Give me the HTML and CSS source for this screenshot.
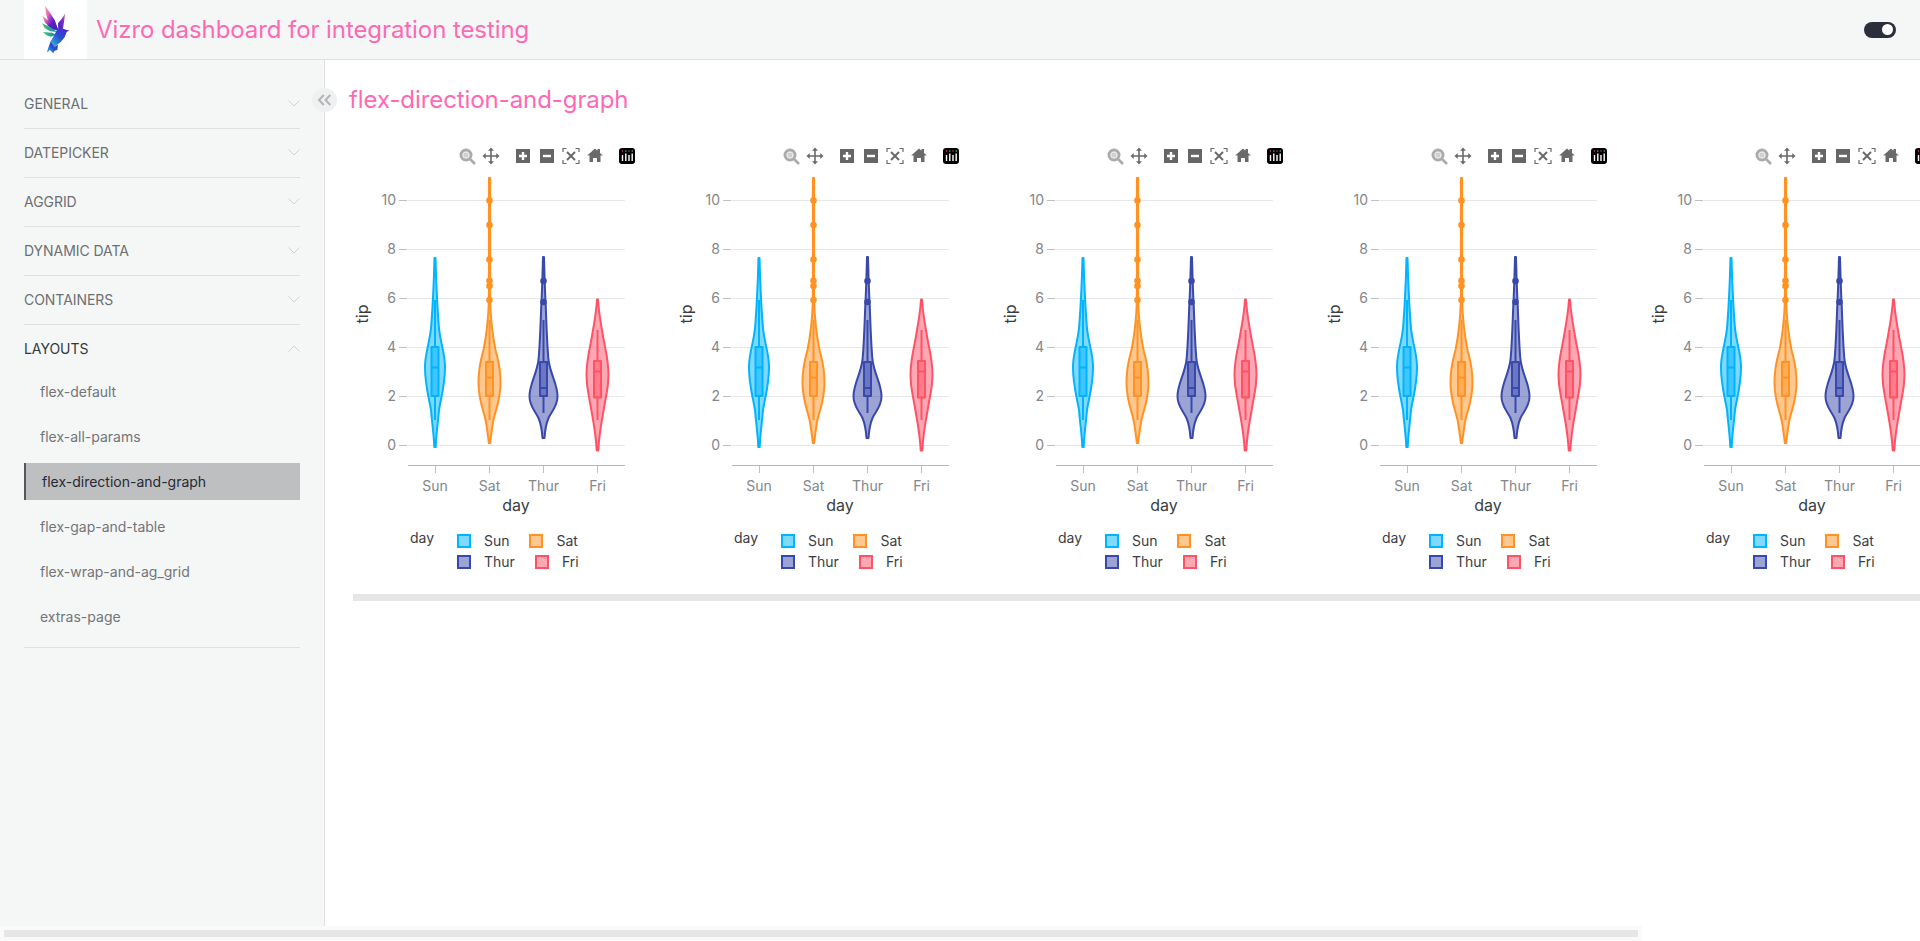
FILE: index.html
```html
<!DOCTYPE html>
<html lang="en">
<head>
<meta charset="utf-8">
<title>Vizro dashboard for integration testing</title>
<link rel="stylesheet" href="styles.css">
</head>
<body>
<svg class="sprite" aria-hidden="true">
  <defs>
    <g id="graphics">
      <g class="modebar">
        <g class="mb-zoom"><circle cx="466" cy="155" r="5" /><path d="M470 159l5 5" /><rect x="463.500" y="152.500" width="5" height="5" /></g>
        <g class="mb-pan"><path d="M491 149v14M484 156h14" /><path class="mb-fill" d="M491 147.500l-3 3.200h6zM491 164.500l-3-3.200h6zM482.500 156l3.200-3v6zM499.500 156l-3.200-3v6z" /></g>
        <rect class="mb-box" x="516" y="149" width="14" height="14" />
        <path class="mb-sign" d="M519 156h8M523 152v8" />
        <rect class="mb-box" x="540" y="149" width="14" height="14" />
        <path class="mb-sign" d="M543 156h8" />
        <g class="mb-auto"><path d="M563 152v-3.500h3.500M575.500 148.500h3.500v3.500M579 160v3.500h-3.500M566.500 163.500h-3.500v-3.500" /><path class="mb-x" d="M567 152l8 8M575 152l-8 8" /></g>
        <path class="mb-fill" d="M595 148.500l2.500 2.200v-1.700h2.500v3.900l2.800 2.600h-2.300v6.500h-3.500v-4h-4v4h-3.500v-6.500h-2.300z" />
        <rect class="mb-logo" x="619" y="148" width="16" height="16" rx="3" />
        <path class="mb-bars" d="M622.500 155v6M625.800 153.500v7.500M629 155v6M632.200 153.500v7.500" />
        <path class="mb-dots" d="M622 151h1M628.500 151h1" />
        <path class="mb-dots alt" d="M625.300 151h1M631.700 151h1" />
      </g>
      <g class="grid">
        <path d="M408 200.500h217M408 249.500h217M408 298.500h217M408 347.500h217M408 396.500h217M408 445.500h217" />
      </g>
      <path class="ticks" d="M399 200.500h8M399 249.500h8M399 298.500h8M399 347.500h8M399 396.500h8M399 445.500h8M435.500 466v7M489.500 466v7M543.500 466v7M597.500 466v7" />
      <path class="axis" d="M408 465.500h217" />

      <g class="violin sun" transform="translate(435 0)">
        <path class="body" d="M0 258L.5 258C1.200 285 2.200 305 3.700 325C5 343 10 352 10 367C10 385 6.500 395 4 410C2.800 425 1.300 432 .7 447L-.7 447C-1.300 432-2.800 425-4 410C-6.500 395-10 385-10 367C-10 352-5 343-3.700 325C-2.200 305-1.200 285-.5 258Z" />
        <path class="whisker" d="M0 300V347M0 396V420" />
        <rect class="box" x="-3.500" y="347" width="7" height="49" />
        <path class="whisker" d="M-3.500 367.500H3.500" />
      </g>

      <g class="violin sat" transform="translate(489.500 0)">
        <path class="body" d="M-.6 178L.6 178L.6 300C1.300 325 3 335 6 350C8 358 11 365 11 383C11 400 6 410 3.500 422C2.200 432 1.300 435 .7 443L-.7 443C-1.300 435-2.200 432-3.500 422C-6 410-11 400-11 383C-11 365-8 358-6 350C-3 335-1.300 325-.6 300Z" />
        <path class="whisker" d="M0 320V362M0 396V420" />
        <rect class="box" x="-3.500" y="362" width="7" height="34" />
        <path class="whisker" d="M-3.500 377.500H3.500" />
        <circle class="pt" cy="200.500" r="3.300" />
        <circle class="pt" cy="225" r="3.300" />
        <circle class="pt" cy="259.500" r="3.300" />
        <circle class="pt" cy="280.700" r="3.300" />
        <circle class="pt" cy="286" r="3.300" />
        <circle class="pt" cy="300" r="3.300" />
      </g>

      <g class="violin thur" transform="translate(543.500 0)">
        <path class="body" d="M-.5 257L.5 257C1 275 1.300 290 2.200 305C3 325 3.500 345 5 360C7 375 14 384 14 396.500C14 406 9 410 5 418C2.500 424 1.500 430 1 438L-1 438C-1.500 430-2.500 424-5 418C-9 410-14 406-14 396.500C-14 384-7 375-5 360C-3.500 345-3 325-2.200 305C-1.300 290-1 275-.5 257Z" />
        <path class="whisker" d="M0 320V362M0 396V413" />
        <rect class="box" x="-3.500" y="362" width="7" height="34" />
        <path class="whisker" d="M-3.500 388H3.500" />
        <circle class="pt" cy="281" r="3.300" />
        <circle class="pt" cy="302" r="3.300" />
      </g>

      <g class="violin fri" transform="translate(597.500 0)">
        <path class="body" d="M-.5 299.500L.5 299.500C1.200 312 3 322 5 333C7 347 11 358 11 375C11 388 9 393 7 405C5 418 1.800 430 .8 450.500L-.8 450.500C-1.800 430-5 418-7 405C-9 393-11 388-11 375C-11 358-7 347-5 333C-3 322-1.200 312-.5 299.500Z" />
        <path class="whisker" d="M0 330V361M0 397.500V420" />
        <rect class="box" x="-3.500" y="361" width="7" height="36.500" />
        <path class="whisker" d="M-3.500 371.500H3.500" />
      </g>

      <rect class="swatch sun" x="458" y="535" width="12" height="12" />
      <rect class="swatch sat" x="530" y="535" width="12" height="12" />
      <rect class="swatch thur" x="458" y="556" width="12" height="12" />
      <rect class="swatch fri" x="536" y="556" width="12" height="12" />
    </g>
  </defs>
</svg>

<div class="page">
  <header class="topbar">
    <div class="logo-box">
      <svg class="logo" viewBox="12 0 189 177" aria-hidden="true">
        <defs>
          <linearGradient id="g-wing" x1="0" y1="0" x2="1" y2="1"><stop offset="0" stop-color="#ffb27a" /><stop offset=".3" stop-color="#e060c0" /><stop offset=".6" stop-color="#5a22c8" /><stop offset="1" stop-color="#3a1fb0" /></linearGradient>
          <linearGradient id="g-right" x1="1" y1="0" x2="0" y2="1"><stop offset="0" stop-color="#ff9a70" /><stop offset=".35" stop-color="#8a2bc8" /><stop offset="1" stop-color="#2a2ac0" /></linearGradient>
          <linearGradient id="g-green" x1="0" y1="0" x2="1" y2="0"><stop offset="0" stop-color="#3fc66b" /><stop offset="1" stop-color="#2a7fc0" /></linearGradient>
          <linearGradient id="g-tail" x1="1" y1="0" x2="0" y2="1"><stop offset="0" stop-color="#4a1fd0" /><stop offset=".5" stop-color="#2a50d0" /><stop offset="1" stop-color="#2ac6d8" /></linearGradient>
        </defs>
        <path fill="url(#g-right)" d="M136 40L132 66L128 92L115 92L114 70L124 58Z" />
        <path fill="url(#g-wing)" d="M75 17L90 38L104 60L116 92L100 88L84 62L78 40Z" />
        <path fill="url(#g-wing)" d="M67 47L88 64L106 92L90 84L74 66Z" />
        <path fill="url(#g-green)" d="M66 70L92 82L112 96L90 94L74 84Z" />
        <path fill="url(#g-green)" d="M69 96L96 98L110 104L92 110L80 106Z" />
        <path fill="url(#g-tail)" d="M112 88L130 86L140 90L148 91L140 96L134 112L122 126L110 136L104 140L92 124L100 110Z" />
        <path fill="url(#g-tail)" d="M92 124L104 140L114 134L112 150L104 152L100 160L90 150L80 158L86 140Z" />
      </svg>
    </div>
    <div class="app-title">Vizro dashboard for integration testing</div>
    <div class="toggle"><span class="knob"></span></div>
  </header>

  <div class="content">
    <nav class="sidebar">
      <div class="accordion">
        <div class="acc-head">GENERAL<svg class="chev" viewBox="0 0 12 7"><path d="M.5 .5L6 6L11.500 .5" /></svg></div>
      </div>
      <div class="accordion">
        <div class="acc-head">DATEPICKER<svg class="chev" viewBox="0 0 12 7"><path d="M.5 .5L6 6L11.500 .5" /></svg></div>
      </div>
      <div class="accordion">
        <div class="acc-head">AGGRID<svg class="chev" viewBox="0 0 12 7"><path d="M.5 .5L6 6L11.500 .5" /></svg></div>
      </div>
      <div class="accordion">
        <div class="acc-head">DYNAMIC DATA<svg class="chev" viewBox="0 0 12 7"><path d="M.5 .5L6 6L11.500 .5" /></svg></div>
      </div>
      <div class="accordion">
        <div class="acc-head">CONTAINERS<svg class="chev" viewBox="0 0 12 7"><path d="M.5 .5L6 6L11.500 .5" /></svg></div>
      </div>
      <div class="accordion">
        <div class="acc-head open">LAYOUTS<svg class="chev" viewBox="0 0 12 7"><path d="M.5 6.500L6 1L11.500 6.500" /></svg></div>
        <ul class="pages">
          <li class="page-link">flex-default</li>
          <li class="page-link">flex-all-params</li>
          <li class="page-link active">flex-direction-and-graph</li>
          <li class="page-link">flex-gap-and-table</li>
          <li class="page-link">flex-wrap-and-ag_grid</li>
          <li class="page-link">extras-page</li>
        </ul>
      </div>
    </nav>

    <main class="main">
      <button class="collapse" aria-label="Collapse"><svg viewBox="0 0 15 12"><path d="M6.800 1L2 6L6.800 11M13.300 1L8.500 6L13.300 11" /></svg></button>
      <h1 class="page-title">flex-direction-and-graph</h1>
      <div class="chart-scroller">
        <div class="chart-row">

          <svg class="chart" viewBox="352 130 300 460">
            <use href="#graphics" />
            <text class="tick end" x="396" y="205">10</text><text class="tick end" x="396" y="254">8</text><text class="tick end" x="396" y="303">6</text><text class="tick end" x="396" y="352">4</text><text class="tick end" x="396" y="401">2</text><text class="tick end" x="396" y="450">0</text>
            <text class="tick mid" x="435" y="491">Sun</text><text class="tick mid" x="489.500" y="491">Sat</text><text class="tick mid" x="543.500" y="491">Thur</text><text class="tick mid" x="597.500" y="491">Fri</text>
            <text class="title mid" x="516" y="511">day</text>
            <text class="title mid" transform="translate(368 314) rotate(-90)">tip</text>
            <text class="label" x="410" y="543">day</text>
            <text class="label" x="484" y="546">Sun</text><text class="label" x="556.500" y="546">Sat</text><text class="label" x="484" y="567">Thur</text><text class="label" x="562" y="567">Fri</text>
          </svg>

          <svg class="chart" viewBox="352 130 300 460">
            <use href="#graphics" />
            <text class="tick end" x="396" y="205">10</text><text class="tick end" x="396" y="254">8</text><text class="tick end" x="396" y="303">6</text><text class="tick end" x="396" y="352">4</text><text class="tick end" x="396" y="401">2</text><text class="tick end" x="396" y="450">0</text>
            <text class="tick mid" x="435" y="491">Sun</text><text class="tick mid" x="489.500" y="491">Sat</text><text class="tick mid" x="543.500" y="491">Thur</text><text class="tick mid" x="597.500" y="491">Fri</text>
            <text class="title mid" x="516" y="511">day</text>
            <text class="title mid" transform="translate(368 314) rotate(-90)">tip</text>
            <text class="label" x="410" y="543">day</text>
            <text class="label" x="484" y="546">Sun</text><text class="label" x="556.500" y="546">Sat</text><text class="label" x="484" y="567">Thur</text><text class="label" x="562" y="567">Fri</text>
          </svg>

          <svg class="chart" viewBox="352 130 300 460">
            <use href="#graphics" />
            <text class="tick end" x="396" y="205">10</text><text class="tick end" x="396" y="254">8</text><text class="tick end" x="396" y="303">6</text><text class="tick end" x="396" y="352">4</text><text class="tick end" x="396" y="401">2</text><text class="tick end" x="396" y="450">0</text>
            <text class="tick mid" x="435" y="491">Sun</text><text class="tick mid" x="489.500" y="491">Sat</text><text class="tick mid" x="543.500" y="491">Thur</text><text class="tick mid" x="597.500" y="491">Fri</text>
            <text class="title mid" x="516" y="511">day</text>
            <text class="title mid" transform="translate(368 314) rotate(-90)">tip</text>
            <text class="label" x="410" y="543">day</text>
            <text class="label" x="484" y="546">Sun</text><text class="label" x="556.500" y="546">Sat</text><text class="label" x="484" y="567">Thur</text><text class="label" x="562" y="567">Fri</text>
          </svg>

          <svg class="chart" viewBox="352 130 300 460">
            <use href="#graphics" />
            <text class="tick end" x="396" y="205">10</text><text class="tick end" x="396" y="254">8</text><text class="tick end" x="396" y="303">6</text><text class="tick end" x="396" y="352">4</text><text class="tick end" x="396" y="401">2</text><text class="tick end" x="396" y="450">0</text>
            <text class="tick mid" x="435" y="491">Sun</text><text class="tick mid" x="489.500" y="491">Sat</text><text class="tick mid" x="543.500" y="491">Thur</text><text class="tick mid" x="597.500" y="491">Fri</text>
            <text class="title mid" x="516" y="511">day</text>
            <text class="title mid" transform="translate(368 314) rotate(-90)">tip</text>
            <text class="label" x="410" y="543">day</text>
            <text class="label" x="484" y="546">Sun</text><text class="label" x="556.500" y="546">Sat</text><text class="label" x="484" y="567">Thur</text><text class="label" x="562" y="567">Fri</text>
          </svg>

          <svg class="chart" viewBox="352 130 300 460">
            <use href="#graphics" />
            <text class="tick end" x="396" y="205">10</text><text class="tick end" x="396" y="254">8</text><text class="tick end" x="396" y="303">6</text><text class="tick end" x="396" y="352">4</text><text class="tick end" x="396" y="401">2</text><text class="tick end" x="396" y="450">0</text>
            <text class="tick mid" x="435" y="491">Sun</text><text class="tick mid" x="489.500" y="491">Sat</text><text class="tick mid" x="543.500" y="491">Thur</text><text class="tick mid" x="597.500" y="491">Fri</text>
            <text class="title mid" x="516" y="511">day</text>
            <text class="title mid" transform="translate(368 314) rotate(-90)">tip</text>
            <text class="label" x="410" y="543">day</text>
            <text class="label" x="484" y="546">Sun</text><text class="label" x="556.500" y="546">Sat</text><text class="label" x="484" y="567">Thur</text><text class="label" x="562" y="567">Fri</text>
          </svg>

        </div>
        <div class="row-scrollbar"></div>
      </div>
    </main>
  </div>

  <div class="page-scrollbar"><div class="page-thumb"></div></div>
</div>
</body>
</html>
```

FILE: styles.css
```css
* { box-sizing: border-box; }

html, body {
  margin: 0;
  height: 941px;
  overflow: hidden;
  background: #fff;
  font-family: Inter, "Noto Sans", sans-serif;
}

.sprite { position: absolute; width: 0; height: 0; }

.page { display: flex; flex-direction: column; height: 941px; }

/* Top bar */
.topbar {
  flex: none;
  display: flex;
  align-items: center;
  height: 60px;
  padding: 0 24px;
  background: #f5f7f6;
  border-bottom: 1px solid #dfe1e1;
}
.logo-box {
  flex: none;
  width: 63px;
  height: 59px;
  background: #fff;
  margin-right: 9px;
}
.logo { display: block; width: 63px; height: 59px; }
.app-title {
  flex: 1;
  font-size: 24px;
  line-height: 32px;
  letter-spacing: -.08px;
  color: #ff69b4;
}
.toggle {
  flex: none;
  position: relative;
  width: 32px;
  height: 16px;
  border-radius: 8px;
  background: #2b2f3b;
}
.knob {
  position: absolute;
  right: 3px;
  top: 2.5px;
  width: 11px;
  height: 11px;
  border-radius: 50%;
  background: #fff;
}

/* Body */
.content { flex: 1; display: flex; min-height: 0; }

.sidebar {
  flex: none;
  width: 325px;
  padding: 20px 24px 0;
  background: #f5f7f6;
  border-right: 1px solid #dfe1e1;
}
.accordion { border-bottom: 1px solid #dfe1e1; }
.acc-head {
  display: flex;
  align-items: center;
  justify-content: space-between;
  height: 48px;
  padding-bottom: 2px;
  font-size: 14px;
  letter-spacing: -.05px;
  color: #6c7072;
}
.acc-head.open { color: #33373f; }
.chev {
  width: 12px;
  height: 7px;
  fill: none;
  stroke: #cfd2d3;
  stroke-width: 1;
}
.pages {
  list-style: none;
  margin: 0;
  padding: 0 0 12px;
  display: flex;
  flex-direction: column;
  gap: 8px;
}
.page-link {
  height: 37px;
  line-height: 37px;
  padding-left: 16px;
  font-size: 14px;
  color: #71757a;
}
.page-link.active {
  background: #bebfc1;
  border-left: 2px solid #54575e;
  color: #262a33;
}

/* Main */
.main { position: relative; flex: 1; min-width: 0; padding: 24px 0 0 24px; }
.collapse {
  position: absolute;
  left: -13px;
  top: 28px;
  width: 25px;
  height: 24px;
  padding: 0;
  border: 0;
  border-radius: 50%;
  background: #eef0f1;
  display: flex;
  align-items: center;
  justify-content: center;
}
.collapse svg {
  width: 15px;
  height: 12px;
  fill: none;
  stroke: #b0b4b8;
  stroke-width: 2;
}
.page-title {
  margin: 0;
  font-size: 24px;
  font-weight: 400;
  line-height: 32px;
  letter-spacing: -.08px;
  color: #ff69b4;
}
.chart-scroller { margin: 14px 0 0 3px; overflow: hidden; }
.chart-row { display: flex; gap: 24px; }
.chart { flex: none; display: block; width: 300px; height: 460px; }
.row-scrollbar { height: 7px; margin: 4px 0 0 1px; background: #e6e6e6; }

/* Chart parts */
.grid path { fill: none; stroke: #e6e7e8; stroke-width: 1; }
.ticks { fill: none; stroke: #bfc1c4; stroke-width: 1; }
.axis { fill: none; stroke: #b4b6b8; stroke-width: 1; }
.tick, .label, .title { font-family: Inter, "Noto Sans", sans-serif; font-size: 14px; }
.title { font-size: 16px; fill: #3a3d45; }
.tick { fill: #83868c; }
.label { fill: #3a3d45; }
.end { text-anchor: end; }
.mid { text-anchor: middle; }

.violin path, .violin rect { stroke-width: 2; }
.violin .whisker { fill: none; }
.violin.sun { color: #00b4ff; }
.violin.sat { color: #ff9222; }
.violin.thur { color: #3949ab; }
.violin.fri { color: #ff5267; }
.violin .body, .violin .box { fill: currentColor; fill-opacity: .5; stroke: currentColor; stroke-linejoin: round; }
.violin .whisker { stroke: currentColor; }
.violin .pt { fill: currentColor; }

.swatch { stroke-width: 2; fill-opacity: .5; }
.swatch.sun { fill: #00b4ff; stroke: #00b4ff; }
.swatch.sat { fill: #ff9222; stroke: #ff9222; }
.swatch.thur { fill: #3949ab; stroke: #3949ab; }
.swatch.fri { fill: #ff5267; stroke: #ff5267; }

/* Modebar */
.mb-zoom circle { fill: none; stroke: #ababab; stroke-width: 3; }
.mb-zoom path { fill: none; stroke: #ababab; stroke-width: 2.6; }
.mb-zoom rect { fill: #d0d0d0; stroke: none; }
.mb-pan path { fill: none; stroke: #6a6a6a; stroke-width: 1.6; }
.mb-pan path.mb-fill { fill: #6a6a6a; stroke: none; }
.mb-fill { fill: #6a6a6a; }
.mb-box { fill: #666; }
.mb-sign { fill: none; stroke: #fff; stroke-width: 2.4; }
.mb-auto path { fill: none; stroke: #6a6a6a; stroke-width: 1.2; }
.mb-auto path.mb-x { stroke-width: 2; }
.mb-logo { fill: #000; }
.mb-bars { fill: none; stroke: #fff; stroke-width: 1.4; }
.mb-dots { fill: none; stroke: #f0386b; stroke-width: 1.6; }
.mb-dots.alt { stroke: #6cc8d8; }

/* Page scrollbar */
.page-scrollbar {
  flex: none;
  width: 1642px;
  height: 15px;
  padding: 4px 4px;
  background: #fafafa;
}
.page-thumb { height: 7px; background: #e6e6e6; }
```
